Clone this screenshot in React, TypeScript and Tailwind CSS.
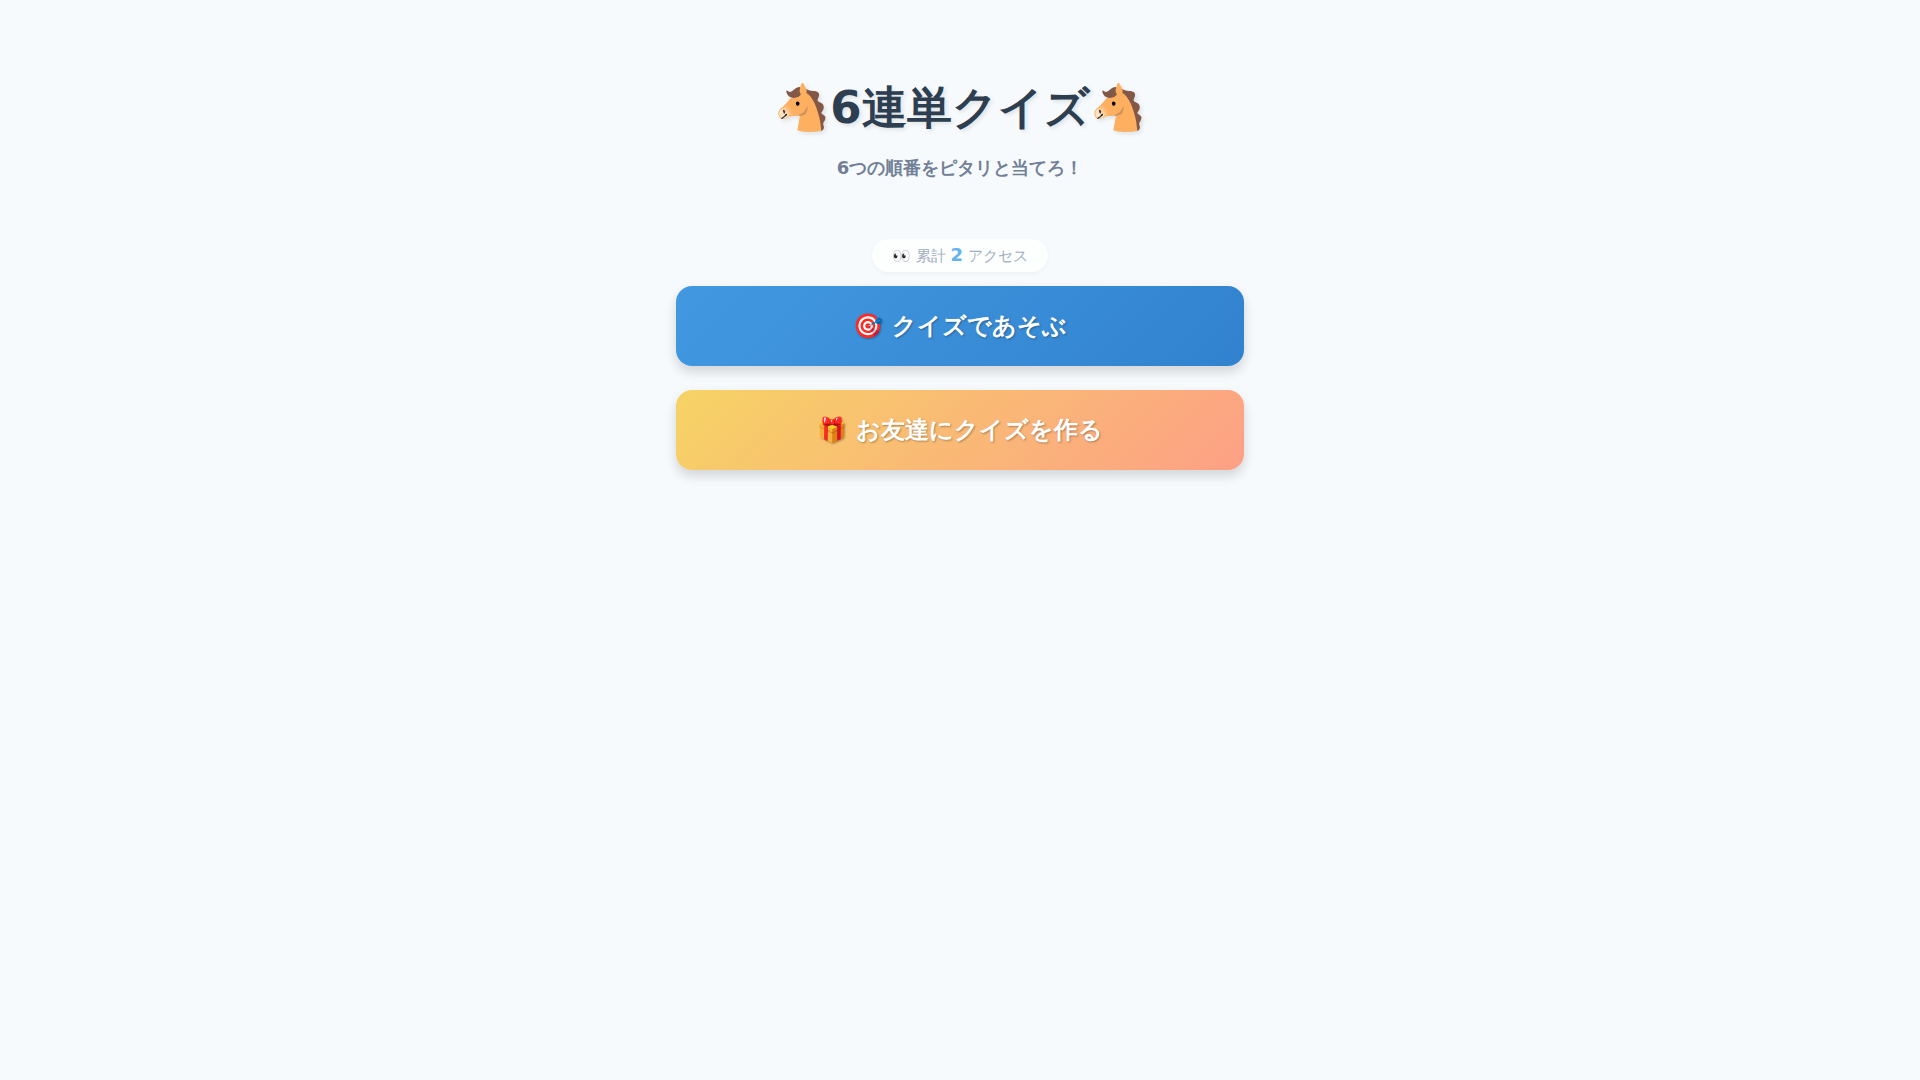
export default function App() {
	return (
		<main className="min-h-screen bg-[#f7fafc] px-5 pt-[70px] font-['DejaVu_Sans',sans-serif]">
			<div className="mx-auto flex w-full max-w-[568px] flex-col items-center">
				{/* Header */}
				<header className="text-center">
					<h1 className="text-[45px] font-bold leading-[76px] text-[#2c3e50] [text-shadow:2px_2px_4px_rgba(0,0,0,0.1)]">
						🐴6連単クイズ🐴
					</h1>
					<p className="mt-2 text-[18px] font-bold leading-7 text-[#718096]">
						6つの順番をピタリと当てろ！
					</p>
				</header>

				{/* Access counter */}
				<p className="mt-[57px] rounded-full bg-white/70 px-5 py-1 text-[15px] leading-6 text-[#a0aec0] shadow-[0_2px_4px_rgba(0,0,0,0.04)]">
					👀 累計 <strong className="text-[18px] text-[#63b3ed]">2</strong> アクセス
				</p>

				{/* Menu */}
				<nav className="mt-[14px] flex w-full flex-col gap-6">
					<button
						type="button"
						className="h-20 w-full cursor-pointer rounded-2xl bg-[linear-gradient(135deg,#4299e1,#3182ce)] text-[24px] font-bold text-white shadow-[0_6px_12px_rgba(0,0,0,0.15)] [text-shadow:1px_1px_2px_rgba(0,0,0,0.3)]"
					>
						🎯 クイズであそぶ
					</button>
					<button
						type="button"
						className="h-20 w-full cursor-pointer rounded-2xl bg-[linear-gradient(135deg,#f6d365,#fda085)] text-[24px] font-bold text-white shadow-[0_6px_12px_rgba(0,0,0,0.15)] [text-shadow:1px_1px_2px_rgba(0,0,0,0.3)]"
					>
						🎁 お友達にクイズを作る
					</button>
				</nav>
			</div>
		</main>
	);
}
